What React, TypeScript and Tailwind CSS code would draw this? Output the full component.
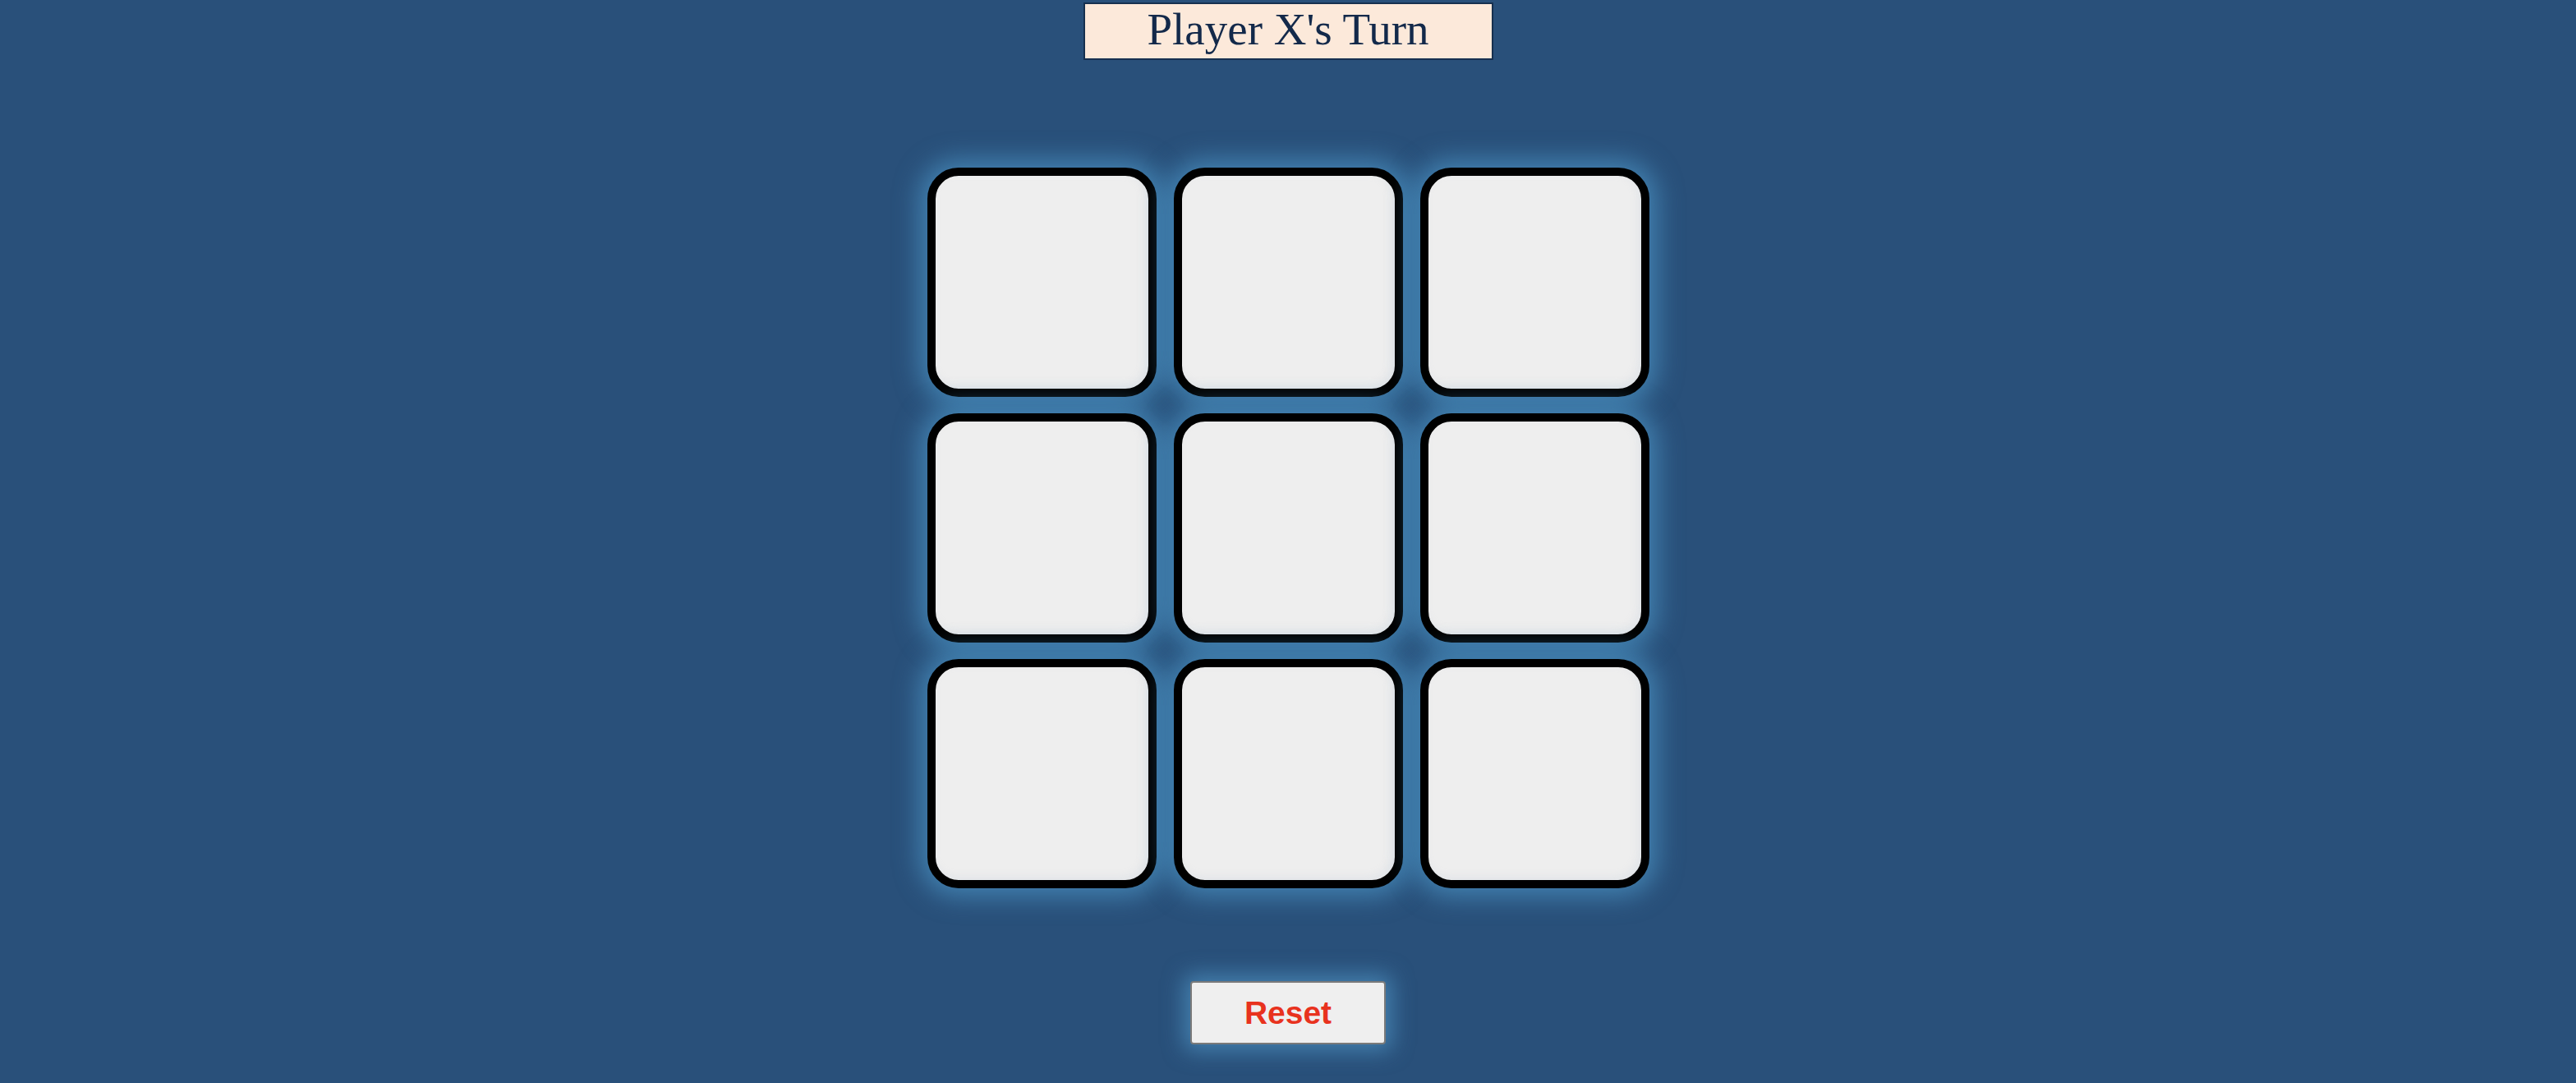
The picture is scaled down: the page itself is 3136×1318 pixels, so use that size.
export default function App() {
  const cells = Array.from({ length: 9 }, (_, i) => i)

  return (
    <div className="min-h-screen bg-[#29507a] flex flex-col items-center">
      {/* status */}
      <div className="mt-[3px] w-[499px] h-[70px] border-2 border-[#16304f] bg-[#fce9da] flex justify-center font-['Liberation_Serif',serif] text-[55px] leading-[61px] text-[#13294a]">
        Player X's Turn
      </div>

      {/* board */}
      <div className="mt-[131px] grid grid-cols-3 gap-x-[21px] gap-y-[20px]">
        {cells.map((i) => (
          <button
            key={i}
            type="button"
            className="w-[279px] h-[279px] rounded-[38px] border-[10px] border-black bg-[#eeeeee] shadow-[0_0_30px_10px_rgba(82,160,210,0.6),inset_-4px_-4px_10px_rgba(190,205,220,0.25)]"
          />
        ))}
      </div>

      {/* reset */}
      <button
        type="button"
        className="mt-[113px] w-[238px] h-[77px] rounded-[4px] border-2 border-[#7a7a7a] bg-[#efefef] pt-[2px] font-['Liberation_Sans',Arial,sans-serif] font-bold text-[39px] text-[#e8321e] shadow-[0_0_26px_8px_rgba(90,165,215,0.55)]"
      >
        Reset
      </button>
    </div>
  )
}
